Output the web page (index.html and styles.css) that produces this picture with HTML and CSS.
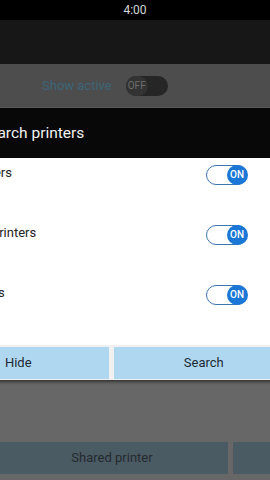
FILE: index.html
```html
<!DOCTYPE html>
<html>
<head>
<meta charset="utf-8">
<link rel="stylesheet" href="styles.css">
</head>
<body>
<div class="screen">
  <div class="status">4:00</div>
  <div class="appbar"></div>
  <div class="filter">
    <span class="filter-label">Show active</span>
    <span class="switch-off"><span class="switch-off-thumb">OFF</span></span>
  </div>
  <div class="content">
    <div class="bottom-buttons">
      <div class="bbtn main">Shared printer</div>
      <div class="bbtn side"></div>
    </div>
  </div>
  <div class="dialog">
    <div class="dialog-title">Search printers</div>
    <div class="dialog-body">
      <div class="row"><span class="row-label">Local printers</span><span class="switch-on"><span class="thumb">ON</span></span></div>
      <div class="row"><span class="row-label">Bluetooth printers</span><span class="switch-on"><span class="thumb">ON</span></span></div>
      <div class="row"><span class="row-label">USB printers</span><span class="switch-on"><span class="thumb">ON</span></span></div>
    </div>
    <div class="dialog-buttons">
      <div class="dbtn">Hide</div>
      <div class="dbtn">Search</div>
    </div>
  </div>
</div>
</body>
</html>
```
FILE: styles.css
```css
html, body {
  margin: 0;
  padding: 0;
}
body {
  font-family: Roboto, "Noto Sans", sans-serif;
  background: #676767;
}
.screen {
  position: relative;
  width: 270px;
  height: 480px;
  overflow: hidden;
  display: flex;
  flex-direction: column;
  background: #676767;
}
.status {
  height: 20px;
  background: #000;
  color: #d8d8d8;
  font-size: 12px;
  line-height: 20px;
  text-align: center;
}
.appbar {
  height: 44px;
  background: #171717;
}
.filter {
  height: 43px;
  background: #4d4d4d;
  border-bottom: 1px solid #5c5c5c;
  display: flex;
  align-items: center;
  padding-left: 42px;
  gap: 14px;
}
.filter-label {
  color: #3c6678;
  font-size: 13px;
}
.switch-off {
  width: 42px;
  height: 20px;
  border-radius: 10px;
  background: #262626;
  display: flex;
}
.switch-off-thumb {
  width: 22px;
  height: 20px;
  border-radius: 10px;
  background: #333;
  color: #6e6e6e;
  font-size: 10px;
  line-height: 20px;
  text-align: center;
}
.content {
  flex: 1;
  display: flex;
  flex-direction: column;
  justify-content: flex-end;
  padding-bottom: 6px;
}
.bottom-buttons {
  display: flex;
  gap: 5px;
  margin-left: -4px;
}
.bbtn {
  flex-shrink: 0;
  height: 32px;
  background: #4b5b64;
  color: #242a2e;
  font-size: 13px;
  line-height: 32px;
  text-align: center;
}
.bbtn.main {
  width: 232px;
}
.bbtn.side {
  width: 60px;
}
.dialog {
  position: absolute;
  top: 108px;
  left: -72px;
  width: 366px;
  box-shadow: 0 2px 3px rgba(0,0,0,0.5);
}
.dialog-title {
  height: 50px;
  background: #080808;
  color: #f2f2f2;
  font-size: 15.5px;
  line-height: 50px;
  padding-left: 52px;
}
.dialog-body {
  background: #fff;
  padding: 7px 0 0 0;
}
.row {
  height: 60px;
  box-sizing: border-box;
  display: flex;
  align-items: flex-start;
  justify-content: space-between;
  padding: 0 47px 0 5px;
}
.row-label {
  color: #222;
  font-size: 13px;
  line-height: 16px;
}
.switch-on {
  box-sizing: border-box;
  width: 41px;
  height: 20px;
  border-radius: 10px;
  border: 1.5px solid #3b76b0;
  background: #fff;
  display: flex;
  justify-content: flex-end;
  align-items: center;
}
.thumb {
  width: 21px;
  height: 20px;
  margin-right: -1.5px;
  border-radius: 10px;
  background: #1a77d6;
  color: #fff;
  font-size: 10px;
  font-weight: 500;
  line-height: 20px;
  text-align: center;
}
.dialog-buttons {
  display: flex;
  gap: 5px;
  background: #f0f0f0;
  padding: 2px 0 1px;
}
.dbtn {
  flex: 1;
  height: 32px;
  background: #afd8f0;
  color: #1d2a33;
  font-size: 13px;
  line-height: 32px;
  text-align: center;
}
```
